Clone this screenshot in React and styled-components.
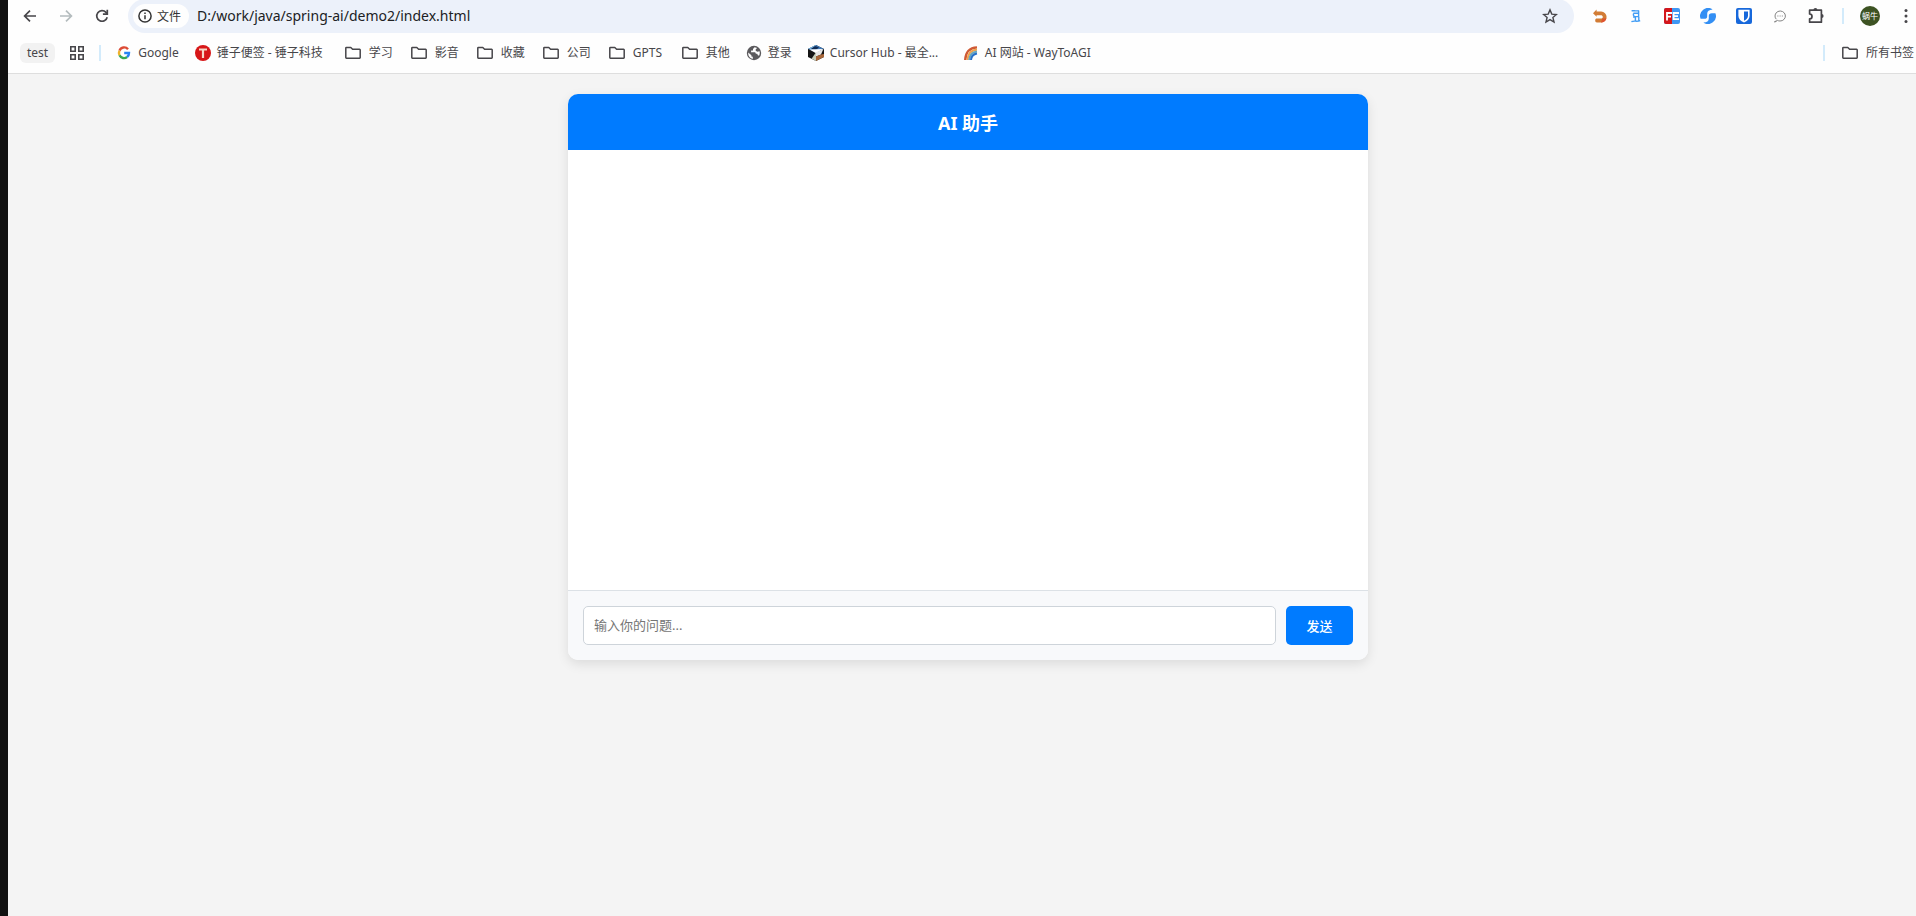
import { useState } from 'react';
import styled, { createGlobalStyle } from 'styled-components';

const GlobalStyle = createGlobalStyle`
  * {
    box-sizing: border-box;
  }

  body {
    margin: 0;
    background: #f4f4f4;
    font-family: "Noto Sans", "Noto Sans CJK SC", sans-serif;
    overflow: hidden;
  }

  button, input {
    font-family: inherit;
  }
`;

const Desktop = styled.div`
  display: flex;
  min-height: 100vh;
  background: #111111;
  padding-left: 8px;
`;

const Browser = styled.div`
  flex: 1;
  min-width: 0;
  display: flex;
  flex-direction: column;
  background: #f4f4f4;
`;

const BrowserHeader = styled.header`
  border-bottom: 1px solid #dedede;
  background: #fefefe;
`;

const Toolbar = styled.nav`
  display: flex;
  align-items: center;
  gap: 16px;
  height: 32px;
  padding-left: 12px;
`;

const IconButton = styled.button`
  flex: none;
  display: flex;
  align-items: center;
  justify-content: center;
  width: 20px;
  height: 32px;
  padding: 0;
  border: none;
  background: none;
  color: ${({ $muted }) => ($muted ? '#b4bcbe' : '#47464a')};
  cursor: pointer;
`;

const AddressBar = styled.div`
  flex: 1;
  display: flex;
  align-items: center;
  height: 34px;
  padding: 0 14px 0 5px;
  border-radius: 17px;
  background: #ecf1fa;
`;

const FileChip = styled.button`
  flex: none;
  display: flex;
  align-items: center;
  gap: 5px;
  height: 24px;
  padding: 0 8px 0 5px;
  border: none;
  border-radius: 12px;
  background: #fefefe;
  color: #333333;
  font-size: 12px;
`;

const AddressInput = styled.input`
  flex: 1;
  min-width: 0;
  height: 24px;
  padding: 0 8px 1px;
  border: none;
  outline: none;
  background: transparent;
  color: #202124;
  font-size: 14px;
`;

const Avatar = styled.button`
  flex: none;
  width: 20px;
  height: 20px;
  padding: 0;
  border: none;
  border-radius: 50%;
  background: #3d5323;
  color: #ffffff;
  font-size: 8px;
  line-height: 20px;
`;

const Divider = styled.span`
  flex: none;
  width: 2px;
  height: 16px;
  background: #d3ebfb;
`;

const BookmarkBar = styled.nav`
  display: flex;
  align-items: center;
  gap: 15px;
  height: 41px;
  padding: 1px 2px 0 12px;
`;

const TestChip = styled.a`
  padding: 0 7px;
  border-radius: 6px;
  background: #f2f2f2;
  color: #47464a;
  font-size: 12px;
  line-height: 20px;
  text-decoration: none;
`;

const Bookmarks = styled.div`
  flex: 1;
  display: flex;
  align-items: center;
  gap: 16px;
`;

const Bookmark = styled.a`
  display: flex;
  align-items: center;
  gap: 6px;
  color: #47464a;
  font-size: 12px;
  line-height: 20px;
  text-decoration: none;
  white-space: nowrap;
`;

const BookmarkLabel = styled.span`
  min-width: ${({ $width }) => $width || 0}px;
`;

const Page = styled.main`
  flex: 1;
  padding: 20px 0 20px 12px;
`;

const ChatCard = styled.section`
  display: flex;
  flex-direction: column;
  max-width: 800px;
  margin: 0 auto;
  border-radius: 10px;
  overflow: hidden;
  background: #ffffff;
  box-shadow: 0 4px 12px rgba(0, 0, 0, 0.1);
`;

const ChatHeader = styled.h1`
  margin: 0;
  padding: 16px 15px 14px;
  background: #007bff;
  color: #ffffff;
  font-size: 18px;
  font-weight: 700;
  line-height: 26px;
  text-align: center;
`;

const Messages = styled.div`
  height: 440px;
  padding: 15px;
  overflow-y: auto;
`;

const ChatForm = styled.form`
  display: flex;
  gap: 10px;
  padding: 15px;
  border-top: 1px solid #dce1e6;
  background: #f8f9fb;
`;

const QuestionInput = styled.input`
  flex: 1;
  min-width: 0;
  height: 39px;
  padding: 0 10px 2px;
  border: 1px solid #ced4da;
  border-radius: 5px;
  background: #ffffff;
  font-size: 13px;

  &::placeholder {
    color: #757575;
  }
`;

const SendButton = styled.button`
  height: 39px;
  width: 67px;
  padding: 0 0 1px;
  border: none;
  border-radius: 5px;
  background: #007bff;
  color: #ffffff;
  font-size: 13px;
  font-weight: 500;
  cursor: pointer;
`;

const BackIcon = () => (
  <svg width="16" height="16" viewBox="0 0 16 16" fill="none" stroke="currentColor" strokeWidth="1.7">
    <path d="M14 8H3M8 2.6 2.6 8 8 13.4" />
  </svg>
);

const ForwardIcon = () => (
  <svg width="16" height="16" viewBox="0 0 16 16" fill="none" stroke="currentColor" strokeWidth="1.7">
    <path d="M2 8h11M8 2.6 13.4 8 8 13.4" />
  </svg>
);

const ReloadIcon = () => (
  <svg width="16" height="16" viewBox="0 0 16 16" fill="none" stroke="currentColor" strokeWidth="1.7">
    <path d="M13.2 9.2A5.3 5.3 0 1 1 12 4.4l1.2 1.4" />
    <path d="M13.3 1.8v4.4H8.9" />
  </svg>
);

const InfoIcon = () => (
  <svg width="14" height="14" viewBox="0 0 14 14" fill="none" stroke="#333333" strokeWidth="1.5">
    <circle cx="7" cy="7" r="6.1" />
    <path d="M7 6.2v4M7 3.4v1.5" />
  </svg>
);

const StarIcon = () => (
  <svg width="16" height="16" viewBox="0 0 16 16" fill="none" stroke="currentColor" strokeWidth="1.4">
    <path d="m8 1.9 1.8 4.2 4.6.4-3.5 3 1.1 4.5L8 11.6 4 14l1.1-4.5-3.5-3 4.6-.4z" />
  </svg>
);

const UndoIcon = () => (
  <svg width="16" height="16" viewBox="0 0 16 16">
    <path d="M1 5.2 4.6 1.4v2.2h4.6a5.4 5.4 0 0 1 0 10.8H5c-1.3 0-1.8-.8-1.8-2s.6-1.8 1.8-1.8h4.6a1.8 1.8 0 0 0 0-3.4H4.6v1.6z" fill="#d27c35" />
    <path d="m9 14.4 1.2-3.6 4.2-.6a5.4 5.4 0 0 1-4.6 4.2z" fill="#df5430" />
  </svg>
);

const ScriptIcon = () => (
  <svg width="16" height="16" viewBox="0 0 16 16" fill="none" stroke="#429df5" strokeWidth="1.4">
    <path d="M3.6 2.8c2.4-.2 4 .4 7.2-.2M10.6 2.6V9M5.4 5.2h5M5.6 5.4c-.6 1.6 0 3 1.4 3.2h3.6M5.2 9.2l1.6-.4M7.4 9v3.8M10.8 9v4M3.4 13.6c2.8-1.2 5.6.4 8.8-1" />
  </svg>
);

const FeIcon = () => (
  <svg width="16" height="16" viewBox="0 0 16 16">
    <rect width="16" height="16" rx="2" fill="#3f97f3" />
    <path d="M2 0h6v16H2a2 2 0 0 1-2-2V2a2 2 0 0 1 2-2z" fill="#d4161b" />
    <path d="M3 12.5V5h5M3 8.6h4M15 5H9.6v6.2H15M9.6 8.2H14" fill="none" stroke="#ffffff" strokeWidth="1.8" />
  </svg>
);

const SwirlIcon = () => (
  <svg width="16" height="16" viewBox="0 0 16 16" fill="#338ff4">
    <path d="M12.6 1.4A8 8 0 0 0 .6 10.8h3.6c2 0 3-.8 3-2.6V5.6c0-2.4 1.8-4 5.4-4.2z" />
    <path d="M3.4 14.6A8 8 0 0 0 15.4 5.2h-3.6c-2 0-3 .8-3 2.6v2.6c0 2.4-1.8 4-5.4 4.2z" />
  </svg>
);

const ShieldIcon = () => (
  <svg width="16" height="16" viewBox="0 0 16 16">
    <rect width="16" height="16" rx="2" fill="#1768db" />
    <path d="M2.4 1.8h11.2v6c0 3-2 5.2-5.6 6.8-3.6-1.6-5.6-3.8-5.6-6.8z" fill="#ffffff" />
    <path d="M8 3.5h4v4.2c0 2-1.4 3.6-4 5z" fill="#1768db" />
  </svg>
);

const BubbleIcon = () => (
  <svg width="16" height="16" viewBox="0 0 16 16" fill="none" stroke="#858585" strokeWidth="1">
    <path d="M4.2 11.2A5.2 5 0 1 1 8 13c-1 0-1.8-.2-2.4-.6L3 14l1.2-1.6M3 14l-1-.3" />
    <path d="M5.4 8h1M7.6 8h1M9.8 8h1" strokeWidth="1.2" />
  </svg>
);

const PuzzleIcon = () => (
  <svg width="18" height="18" viewBox="0 0 18 18" fill="none" stroke="currentColor" strokeWidth="1.7" strokeLinejoin="round">
    <path d="M2.6 3.2h11.8v12H2.6v-3.4a2.4 2.4 0 0 0 0-4.8z" />
    <path d="M6.4 3a2 2 0 0 1 4 0zM14.6 7a2 2 0 0 1 0 4z" fill="currentColor" stroke="none" />
  </svg>
);

const DotsIcon = () => (
  <svg width="4" height="16" viewBox="0 0 4 16" fill="currentColor">
    <circle cx="2" cy="2.5" r="1.5" />
    <circle cx="2" cy="8" r="1.5" />
    <circle cx="2" cy="13.5" r="1.5" />
  </svg>
);

const GridIcon = () => (
  <svg width="14" height="14" viewBox="0 0 14 14" fill="none" stroke="#47464a" strokeWidth="1.6">
    <path d="M.8.8h4.4v4.4H.8zM8.8.8h4.4v4.4H8.8zM.8 8.8h4.4v4.4H.8zM8.8 8.8h4.4v4.4H8.8z" />
  </svg>
);

const FolderIcon = () => (
  <svg width="20" height="16" viewBox="0 0 20 16" fill="none" stroke="#47464a" strokeWidth="1.5" strokeLinejoin="round">
    <path d="M2.8 3.1a.6.6 0 0 1 .6-.6h4.4l1.8 1.8h7a.6.6 0 0 1 .6.6v7.7a.6.6 0 0 1-.6.6H3.4a.6.6 0 0 1-.6-.6z" />
  </svg>
);

const GoogleIcon = () => (
  <svg width="16" height="16" viewBox="0 0 16 16" fill="none" strokeWidth="2.4">
    <path d="M12 4.2A5 5 0 0 0 3.5 5.7" stroke="#dc4b35" />
    <path d="M3.5 5.7a5 5 0 0 0 0 4.6" stroke="#eeb32b" />
    <path d="M3.5 10.3a5 5 0 0 0 7.6 1.7" stroke="#37a853" />
    <path d="M11.1 12A5 5 0 0 0 13 8H8.2" stroke="#2583f5" />
  </svg>
);

const SmartisanIcon = () => (
  <svg width="16" height="16" viewBox="0 0 16 16">
    <circle cx="8" cy="8" r="8" fill="#d71718" />
    <path d="M4 3.6h8v2H9.1V13H6.9V5.6H4z" fill="#f6d9c8" />
  </svg>
);

const GlobeIcon = () => (
  <svg width="16" height="16" viewBox="0 0 16 16">
    <circle cx="8" cy="8" r="7.2" fill="#5b5a5d" />
    <path d="M8.6 2.2 7 4v1.6H5.2L5 7.2h3.4c1 0 1.4.6 1.4 1.6h1.4l.8 1.6h1.2c.6-1.2.8-3 .3-4.2l-2.3.6-1.6-1.2.2-1.4 1.3-1.2zM2.2 7.6l3.2 2.6v1.2l1.4.4v2.1C4 13.6 2 11 2.2 7.6z" fill="#fefefe" />
  </svg>
);

const CubeIcon = () => (
  <svg width="16" height="16" viewBox="0 0 16 16">
    <path d="m8 0 8 4v8l-8 4-8-4V4z" fill="#151515" />
    <path d="m8 0 8 4-8 3-8-3z" fill="#417ab9" />
    <path d="M8 0 0 4l7-.6z" fill="#7fc0ee" />
    <path d="m7 1 4 1.6-3 2.2-5-1z" fill="#102b55" />
    <path d="M1.4 4.4 15 4 8 8.2z" fill="#ffffff" />
    <path d="M8 7.2 15.4 4 13 9.6l-5 2z" fill="#e8e8e8" />
    <path d="M3.6 13.8 8 7.2V16z" fill="#c9cdb8" />
    <path d="M8 11.6 13 9.6 16 9v3l-8 4z" fill="#a8673a" />
  </svg>
);

const RainbowIcon = () => (
  <svg width="16" height="16" viewBox="0 0 16 16" fill="none" strokeWidth="2.4">
    <path d="M2.2 15C2.6 7.6 6.6 2.8 14 2.4" stroke="#cf5a35" />
    <path d="M4.4 15C4.8 9 8 5.2 14 4.6" stroke="#efa24d" strokeWidth="2" />
    <path d="M6.2 15c.4-4.8 3-7.8 7.8-8.4" stroke="#66a6bf" strokeWidth="2" />
    <path d="M8 15c.3-3.4 2.4-5.8 6-6.4" stroke="#2870c9" strokeWidth="2" />
  </svg>
);

const bookmarks = [
  { label: 'Google', icon: GoogleIcon },
  { label: '锤子便签 - 锤子科技', icon: SmartisanIcon, width: 110 },
  { label: '学习', icon: FolderIcon },
  { label: '影音', icon: FolderIcon },
  { label: '收藏', icon: FolderIcon },
  { label: '公司', icon: FolderIcon },
  { label: 'GPTS', icon: FolderIcon, width: 31 },
  { label: '其他', icon: FolderIcon },
  { label: '登录', icon: GlobeIcon },
  { label: 'Cursor Hub - 最全...', icon: CubeIcon, width: 117 },
  { label: 'AI 网站 - WayToAGI', icon: RainbowIcon },
];

const extensions = [
  { name: 'Undo', icon: UndoIcon },
  { name: 'Scripts', icon: ScriptIcon },
  { name: 'FeHelper', icon: FeIcon },
  { name: 'Swirl', icon: SwirlIcon },
  { name: 'Passwords', icon: ShieldIcon },
  { name: 'Chat', icon: BubbleIcon },
  { name: 'Extensions', icon: PuzzleIcon },
];

const BrowserToolbar = () => {
  const [url, setUrl] = useState('D:/work/java/spring-ai/demo2/index.html');

  return (
    <Toolbar>
      <IconButton aria-label="Back"><BackIcon /></IconButton>
      <IconButton aria-label="Forward" $muted><ForwardIcon /></IconButton>
      <IconButton aria-label="Reload"><ReloadIcon /></IconButton>
      <AddressBar>
        <FileChip><InfoIcon />文件</FileChip>
        <AddressInput aria-label="Address" value={url} onChange={e => setUrl(e.target.value)} />
        <IconButton aria-label="Bookmark"><StarIcon /></IconButton>
      </AddressBar>
      {extensions.map(({ name, icon: Icon }) => (
        <IconButton key={name} aria-label={name}><Icon /></IconButton>
      ))}
      <Divider />
      <Avatar>蜗牛</Avatar>
      <IconButton aria-label="Menu"><DotsIcon /></IconButton>
    </Toolbar>
  );
};

const BookmarksToolbar = () => (
  <BookmarkBar>
    <TestChip href="#">test</TestChip>
    <Bookmark href="#" aria-label="Apps"><GridIcon /></Bookmark>
    <Divider />
    <Bookmarks>
      {bookmarks.map(({ label, icon: Icon, width }) => (
        <Bookmark key={label} href="#">
          <Icon />
          <BookmarkLabel $width={width}>{label}</BookmarkLabel>
        </Bookmark>
      ))}
    </Bookmarks>
    <Divider />
    <Bookmark href="#"><FolderIcon />所有书签</Bookmark>
  </BookmarkBar>
);

const Chat = () => {
  const [question, setQuestion] = useState('');

  return (
    <ChatCard>
      <ChatHeader>AI 助手</ChatHeader>
      <Messages />
      <ChatForm onSubmit={e => e.preventDefault()}>
        <QuestionInput
          aria-label="输入你的问题"
          placeholder="输入你的问题..."
          value={question}
          onChange={e => setQuestion(e.target.value)}
        />
        <SendButton type="submit">发送</SendButton>
      </ChatForm>
    </ChatCard>
  );
};

const App = () => (
  <>
    <GlobalStyle />
    <Desktop>
      <Browser>
        <BrowserHeader>
          <BrowserToolbar />
          <BookmarksToolbar />
        </BrowserHeader>
        <Page>
          <Chat />
        </Page>
      </Browser>
    </Desktop>
  </>
);

export default App;
